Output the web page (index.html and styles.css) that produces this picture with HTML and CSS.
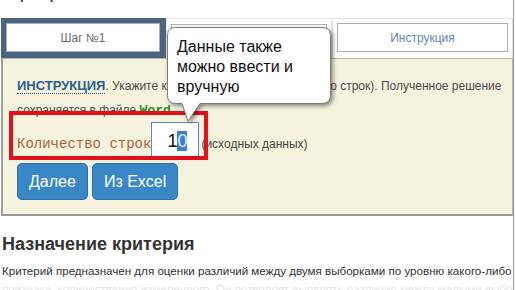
FILE: index.html
```html
<!DOCTYPE html>
<html>
  <head>
    <meta charset="UTF-8" />
    <title>Критерий Манна-Уитни</title>
    <link rel="stylesheet" href="styles.css">
  </head>
  <body>
    <div class="page">
      <div class="lead">в критерия Манна-Уитни</div>
      <div class="tabs">
        <div class="tab tab--active"><div class="tab__inner">Шаг №1</div></div>
        <div class="tab tab--middle"><div class="tab__inner">Шаг №2</div></div>
        <div class="tab tab--last"><div class="tab__inner tab__inner--link">Инструкция</div></div>
      </div>
      <div class="panel">
        <p class="panel__text">
          <span class="hint">ИНСТРУКЦИЯ</span>. Укажите количество наблюдений (число строк). Полученное решение<br />
          сохраняется в файле <b class="word">Word</b>
        </p>
        <div class="rows-field">
          <span class="rows-field__label">Количество строк</span>
          <div class="rows-field__input">1<span class="selected">0</span></div>
          <span class="rows-field__note">(исходных данных)</span>
        </div>
        <div class="buttons">
          <button class="btn">Далее</button>
          <button class="btn">Из Excel</button>
        </div>
        <div class="marker"></div>
      </div>
      <div class="section">
        <div class="section__title">Назначение критерия</div>
        <p class="section__text">
          Критерий предназначен для оценки различий между двумя выборками по уровню какого-либо<br />
          <span class="faded">признака, количественно измеренного. Он позволяет выявлять различия между малыми выборками</span>
        </p>
      </div>
      <div class="callout">
        <svg class="callout__shape" width="172" height="100" viewBox="0 0 172 100">
          <path d="M8.5 0.5 H155 Q163.5 0.5 163.5 8.5 V68 Q163.5 76.5 155 76.5 H33 L21 94 L15 76.5 H8.5 Q0.5 76.5 0.5 68 V8.5 Q0.5 0.5 8.5 0.5 Z" fill="#fff" stroke="#7c7c7c" />
        </svg>
        <div class="callout__text">Данные также<br />можно ввести и<br />вручную</div>
      </div>
    </div>
  </body>
</html>
```

FILE: styles.css
```css
html,
body {
  margin: 0;
  padding: 0;
  background: #fff;
}
p {
  margin: 0;
}
body {
  font-family: "Liberation Sans", Arial, sans-serif;
  color: #333;
}
.page {
  position: relative;
  width: 513px;
  height: 290px;
  overflow: hidden;
  border-right: 1px solid #9c9c9c;
}
.lead {
  margin: -13px 0 0 2px;
  font-size: 13px;
  line-height: 16px;
  font-weight: bold;
  color: #333;
}
.tabs {
  display: flex;
  margin-top: 15px;
  height: 40px;
}
.tab {
  box-sizing: border-box;
  height: 40px;
  background: #fff;
  border: 1px solid #e2e2e2;
  border-bottom: none;
  padding: 4px 4px 6px 4px;
}
.tab--active {
  width: 165px;
  margin-left: 1px;
  border: none;
  background: #4b6580;
  padding: 5px 6px 6px 5px;
}
.tab--middle {
  width: 166px;
  padding-top: 5px;
}
.tab--last {
  flex: 1;
}
.tab__inner {
  box-sizing: border-box;
  height: 29px;
  border: 1px solid #a8b0b8;
  background: #fff;
  display: flex;
  align-items: center;
  justify-content: center;
  font-size: 12px;
  color: #6b6b6b;
}
.tab__inner--link {
  color: #6388b2;
}
.panel {
  position: relative;
  background: #f5f3de;
  border: 1px solid #b4b4aa;
  border-left: 2px solid #a0a09a;
  border-bottom: 2px solid #9a9a96;
  margin-left: 1px;
  padding: 15px 14px 14px 14px;
}
.panel__text {
  font-size: 12px;
  line-height: 24px;
  color: #4a4a4a;
  white-space: nowrap;
}
.hint {
  font-size: 13px;
  font-weight: bold;
  color: #28618a;
  border-bottom: 1px dotted #28618a;
}
.word {
  font-family: "Liberation Mono", "Courier New", monospace;
  font-size: 13px;
  color: #23902a;
}
.rows-field {
  display: flex;
  align-items: center;
  height: 38px;
  margin-top: -1px;
}
.rows-field__label {
  font-family: "Liberation Mono", "Courier New", monospace;
  font-size: 14px;
  color: #b0603f;
  margin-top: 6px;
}
.rows-field__input {
  box-sizing: border-box;
  width: 48px;
  height: 38px;
  border: 1px solid #5b86c2;
  background: #fff;
  padding-left: 15px;
  font-size: 18px;
  line-height: 36px;
  color: #111;
}
.selected {
  background: #3d7fd8;
  color: #e8f0ff;
  line-height: 20px;
  display: inline-block;
}
.rows-field__note {
  font-size: 12px;
  color: #444;
  margin-left: 2px;
  margin-top: 6px;
}
.buttons {
  display: flex;
  gap: 4px;
  margin-top: 3px;
}
.btn {
  height: 37px;
  padding: 0 11px;
  background: #3a87c8;
  border: 1px solid #2d6fa8;
  border-radius: 5px;
  color: #fff;
  font-family: "Liberation Sans", Arial, sans-serif;
  font-size: 16px;
}
.marker {
  position: absolute;
  left: 6px;
  top: 52px;
  width: 199px;
  height: 49px;
  box-sizing: border-box;
  border: 4px solid #e2101b;
}
.section {
  padding-left: 2px;
}
.section__title {
  margin-top: 17px;
  font-size: 18px;
  line-height: 22px;
  font-weight: bold;
  color: #333;
}
.section__text {
  margin-top: 7px;
  font-size: 11.6px;
  line-height: 18px;
  color: #333;
  white-space: nowrap;
}
.faded {
  color: #e6e6e6;
}
.callout {
  position: absolute;
  left: 167px;
  top: 27px;
  width: 172px;
  height: 100px;
}
.callout__shape {
  position: absolute;
  left: 0;
  top: 0;
  filter: drop-shadow(2px 2px 2px rgba(0, 0, 0, 0.45));
}
.callout__text {
  position: absolute;
  left: 10px;
  top: 10px;
  font-size: 16px;
  line-height: 20px;
  color: #111;
}
```
